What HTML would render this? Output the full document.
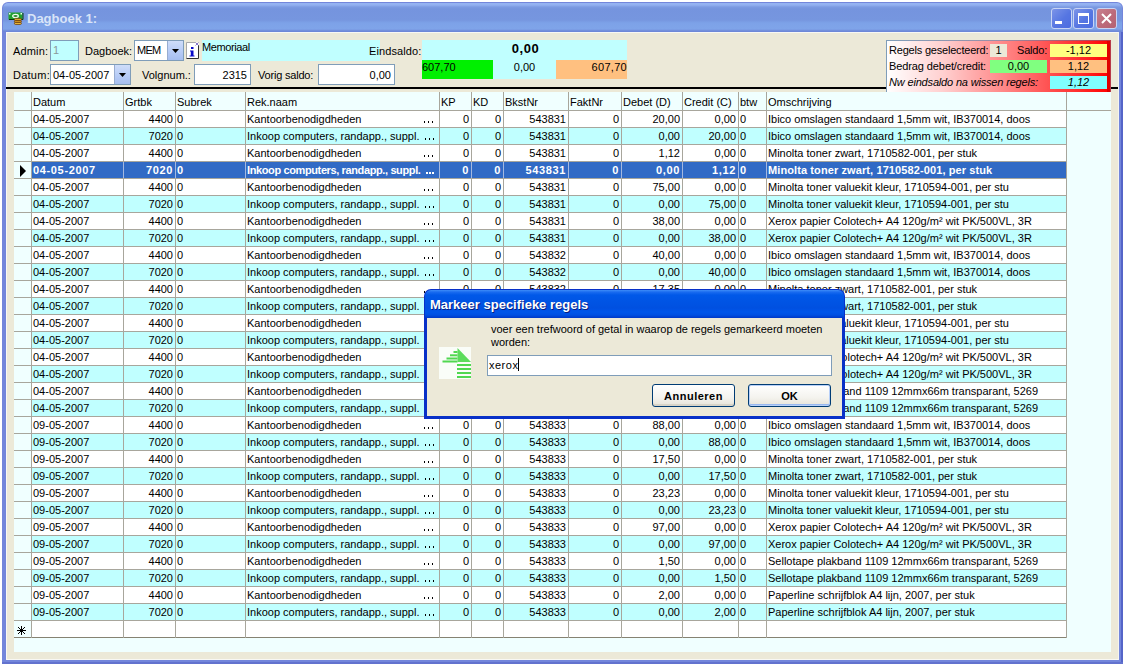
<!DOCTYPE html><html><head><meta charset="utf-8"><style>
*{margin:0;padding:0;box-sizing:border-box}
html,body{width:1126px;height:667px;overflow:hidden;background:#fff;font-family:"Liberation Sans", sans-serif;font-size:11px;color:#000}
.a{position:absolute}
.t{position:absolute;white-space:pre;line-height:16px}
.c{position:absolute;white-space:pre;overflow:hidden;height:16px;line-height:16px}
.r{text-align:right}
.vl{position:absolute;width:1px;background:#A8A69C}
.hl{position:absolute;height:1px;background:#A8A69C}

</style></head><body>
<div class="a" style="left:2px;top:2px;width:1121px;height:662px;background:#7386DB;border-radius:6px 6px 0 0"></div>
<div class="a" style="left:3px;top:3px;width:1119px;height:29px;border-radius:5px 5px 0 0;background:linear-gradient(#96B4F2 0px,#92B0F0 2px,#7C9AE2 4px,#7594DE 6px,#7696DF 17px,#7DA2E8 20px,#7FA4E9 26px,#7390DC 27.5px,#6C84D6 29px)"></div>
<svg class="a" style="left:8px;top:12px" width="16" height="14" viewBox="0 0 16 14">
<rect x="0.5" y="0.5" width="14" height="7" fill="#20A030"/>
<path d="M1 7.5H15V1" fill="none" stroke="#0A3A10" stroke-width="1"/>
<ellipse cx="7.5" cy="4" rx="2.8" ry="1.6" fill="#2A8A30" stroke="#F0FFF0" stroke-width="1.3"/>
<rect x="1" y="1" width="1.5" height="1.5" fill="#F0FFF0"/><rect x="12.5" y="1" width="1.5" height="1.5" fill="#F0FFF0"/>
<g stroke="#6A3A08" stroke-width="0.8">
<rect x="6.4" y="6.4" width="7" height="2" rx="1" fill="#F0C040"/>
<rect x="6.4" y="8.4" width="7" height="2" rx="1" fill="#E0A020"/>
<rect x="6.4" y="10.4" width="7" height="2" rx="1" fill="#F0C040"/>
</g>
</svg>
<div class="t" style="left:27px;top:11px;font-size:13px;font-weight:bold;color:#D8E4F8;line-height:16px">Dagboek 1:</div>
<div class="a" style="left:1051px;top:8px;width:21px;height:21px;border:1px solid #C8D4F4;border-radius:3px;background:linear-gradient(135deg,#7C94E8,#5676E2 55%,#4C6CE0)"><div class="a" style="left:3px;top:12px;width:7px;height:3px;background:#fff"></div></div>
<div class="a" style="left:1073px;top:8px;width:21px;height:21px;border:1px solid #C8D4F4;border-radius:3px;background:linear-gradient(135deg,#7C94E8,#5676E2 55%,#4C6CE0)"><div class="a" style="left:4px;top:4px;width:11px;height:11px;border:1px solid #fff;border-top-width:3px"></div></div>
<div class="a" style="left:1096px;top:8px;width:21px;height:21px;border:1px solid #C8D4F4;border-radius:3px;background:linear-gradient(135deg,#C8808E,#BC6A7A 55%,#B46272)"><svg class="a" style="left:3px;top:3px" width="13" height="13"><path d="M2 2L11 11M11 2L2 11" stroke="#fff" stroke-width="2"/></svg></div>
<div class="a" style="left:1121px;top:32px;width:2px;height:632px;background:#5565C8"></div>
<div class="a" style="left:2px;top:662px;width:1121px;height:2px;background:#6272CE"></div>
<div class="a" style="left:6px;top:32px;width:1113px;height:628px;background:#ECE9D8;border:1px solid #F8F8F4;border-right-color:#F4F4F0"></div>
<div class="t" style="left:13px;top:43px;letter-spacing:0.15px">Admin:</div>
<div class="a" style="left:50px;top:40px;width:29px;height:21px;background:#C0FFFF;border:1px solid #7F9DB9;"></div>
<div class="t" style="left:53px;top:42px;color:#8A9A9A">1</div>
<div class="t" style="left:85px;top:43px;">Dagboek:</div>
<div class="a" style="left:134px;top:40px;width:50px;height:21px;background:#fff;border:1px solid #7F9DB9;"></div>
<div class="t" style="left:137px;top:42px;letter-spacing:-0.7px">MEM</div>
<div class="a" style="left:167px;top:41px;width:16px;height:19px;background:linear-gradient(#CFDDF9,#B9CDF6 50%,#A6BEF0);border-left:1px solid #98ACD0"></div>
<svg class="a" style="left:172px;top:49px" width="7" height="4"><path d="M0 0H7L3.5 4Z" fill="#000"/></svg>
<svg class="a" style="left:186px;top:42px" width="14" height="18" viewBox="0 0 14 18">
<rect x="0.5" y="0.5" width="12" height="16" fill="#fff"/>
<path d="M0.5 16.5V0.5H9.5" fill="none" stroke="#A8A8A8"/>
<path d="M12.5 3V16.5H0.5" fill="none" stroke="#303030"/>
<path d="M9.5 0.5L12.5 3.5M12.5 0.5L9.5 3.5" stroke="#8878C8" stroke-width="1"/>
<rect x="5" y="5" width="2.5" height="2" fill="#0808C8"/>
<path d="M4 8.5H7.5V13.5H8.5V14.5H3.5V13.5H4.8V9.5H4Z" fill="#0808C8"/>
</svg>
<div class="a" style="left:202px;top:40px;width:178px;height:21px;background:#C0FFFF"></div>
<div class="t" style="left:202px;top:39px;letter-spacing:-0.4px">Memoriaal</div>
<div class="t" style="left:369px;top:43px;letter-spacing:0.1px">Eindsaldo:</div>
<div class="t" style="left:13px;top:67px;letter-spacing:0.25px">Datum:</div>
<div class="a" style="left:50px;top:64px;width:81px;height:21px;background:#fff;border:1px solid #7F9DB9;"></div>
<div class="t" style="left:53px;top:67px;">04-05-2007</div>
<div class="a" style="left:114px;top:65px;width:16px;height:19px;background:linear-gradient(#CFDDF9,#B9CDF6 50%,#A6BEF0);border-left:1px solid #98ACD0"></div>
<svg class="a" style="left:119px;top:73px" width="7" height="4"><path d="M0 0H7L3.5 4Z" fill="#000"/></svg>
<div class="t" style="left:142px;top:67px;">Volgnum.:</div>
<div class="a" style="left:194px;top:64px;width:57px;height:21px;background:#fff;border:1px solid #7F9DB9;"></div>
<div class="t r" style="left:196px;top:67px;width:51px">2315</div>
<div class="t" style="left:258px;top:67px;letter-spacing:-0.2px">Vorig saldo:</div>
<div class="a" style="left:318px;top:64px;width:77px;height:21px;background:#fff;border:1px solid #7F9DB9;"></div>
<div class="t r" style="left:320px;top:67px;width:71px">0,00</div>
<div class="a" style="left:422px;top:40px;width:205px;height:39px;background:#C0FFFF"></div>
<div class="t" style="left:423px;top:41px;width:205px;text-align:center;font-size:13px;font-weight:bold;line-height:16px;letter-spacing:0.6px">0,00</div>
<div class="a" style="left:422px;top:60px;width:71px;height:19px;background:#00F000"></div>
<div class="a" style="left:556px;top:60px;width:71px;height:19px;background:#FFC080"></div>
<div class="t" style="left:422px;top:59px;">607,70</div>
<div class="t" style="left:493px;top:59px;width:63px;text-align:center">0,00</div>
<div class="t r" style="left:556px;top:59px;width:71px;letter-spacing:0.3px">607,70</div>
<div class="a" style="left:6px;top:87px;width:1112px;height:2px;background:#000"></div>
<div class="a" style="left:886px;top:40px;width:225px;height:53px;border:1px solid #7F9DB9;border-image:linear-gradient(90deg,#7F9DB9 0%,#9A8FA8 50%,#B83848 100%) 1;background:linear-gradient(90deg,#FFFFFF 0%,#FFD0D0 25%,#FF8080 55%,#FF3030 85%,#FF0000 100%)"></div>
<div class="a" style="left:1107px;top:41px;width:3px;height:51px;background:#E00000"></div>
<div class="t" style="left:889px;top:42px;letter-spacing:-0.2px">Regels geselecteerd:</div>
<div class="a" style="left:990px;top:44px;width:17px;height:13px;background:#ECE9D8"></div>
<div class="t" style="left:990px;top:42px;width:17px;text-align:center">1</div>
<div class="t" style="left:1017px;top:42px;letter-spacing:-0.2px">Saldo:</div>
<div class="a" style="left:1050px;top:44px;width:57px;height:13px;background:#FFFF80"></div>
<div class="t" style="left:1050px;top:42px;width:57px;text-align:center">-1,12</div>
<div class="t" style="left:889px;top:58px;letter-spacing:-0.1px">Bedrag debet/credit:</div>
<div class="a" style="left:990px;top:60px;width:57px;height:13px;background:#80FF80"></div>
<div class="t" style="left:990px;top:58px;width:57px;text-align:center">0,00</div>
<div class="a" style="left:1050px;top:60px;width:57px;height:13px;background:#FFC080"></div>
<div class="t" style="left:1050px;top:58px;width:57px;text-align:center">1,12</div>
<div class="t" style="left:889px;top:74px;font-style:italic;letter-spacing:-0.17px">Nw eindsaldo na wissen regels:</div>
<div class="a" style="left:1050px;top:76px;width:57px;height:13px;background:#80FFFF"></div>
<div class="t" style="left:1050px;top:74px;width:57px;text-align:center;font-style:italic">1,12</div>
<div class="a" style="left:14px;top:92px;width:1097px;height:560px;background:#F0FFFF"></div>
<div class="c" style="left:32px;top:93px;width:91px;padding-left:1px;height:18px;line-height:18px">Datum</div>
<div class="c" style="left:124px;top:93px;width:51px;padding-left:1px;height:18px;line-height:18px">Grtbk</div>
<div class="c" style="left:176px;top:93px;width:69px;padding-left:1px;height:18px;line-height:18px">Subrek</div>
<div class="c" style="left:246px;top:93px;width:193px;padding-left:1px;height:18px;line-height:18px">Rek.naam</div>
<div class="c" style="left:440px;top:93px;width:31px;padding-left:1px;height:18px;line-height:18px">KP</div>
<div class="c" style="left:472px;top:93px;width:31px;padding-left:1px;height:18px;line-height:18px">KD</div>
<div class="c" style="left:504px;top:93px;width:64px;padding-left:1px;height:18px;line-height:18px">BkstNr</div>
<div class="c" style="left:569px;top:93px;width:52px;padding-left:1px;height:18px;line-height:18px">FaktNr</div>
<div class="c" style="left:622px;top:93px;width:60px;padding-left:1px;height:18px;line-height:18px">Debet (D)</div>
<div class="c" style="left:683px;top:93px;width:55px;padding-left:1px;height:18px;line-height:18px">Credit (C)</div>
<div class="c" style="left:739px;top:93px;width:27px;padding-left:1px;height:18px;line-height:18px">btw</div>
<div class="c" style="left:767px;top:93px;width:299px;padding-left:1px;height:18px;line-height:18px">Omschrijving</div>
<div class="hl" style="left:14px;top:110px;width:1097px"></div>
<div class="a" style="left:32px;top:111px;width:1034px;height:16px;background:#FFFFFF"></div>
<div class="hl" style="left:14px;top:127px;width:1052px;"></div>
<div class="c" style="left:32px;top:111px;width:91px;padding-left:1px;">04-05-2007</div>
<div class="c" style="left:124px;top:111px;width:51px;text-align:right;padding-right:2px;">4400</div>
<div class="c" style="left:176px;top:111px;width:69px;padding-left:1px;">0</div>
<div class="c" style="left:246px;top:111px;width:193px;padding-left:1px;padding-right:5px;">Kantoorbenodigdheden</div>
<div class="a" style="left:424px;top:121px;width:1px;height:2px;background:#000"></div>
<div class="a" style="left:428px;top:121px;width:1px;height:2px;background:#000"></div>
<div class="a" style="left:432px;top:121px;width:1px;height:2px;background:#000"></div>
<div class="c" style="left:440px;top:111px;width:31px;text-align:right;padding-right:2px;">0</div>
<div class="c" style="left:472px;top:111px;width:31px;text-align:right;padding-right:2px;">0</div>
<div class="c" style="left:504px;top:111px;width:64px;text-align:right;padding-right:2px;">543831</div>
<div class="c" style="left:569px;top:111px;width:52px;text-align:right;padding-right:2px;">0</div>
<div class="c" style="left:622px;top:111px;width:60px;text-align:right;padding-right:2px;">20,00</div>
<div class="c" style="left:683px;top:111px;width:55px;text-align:right;padding-right:2px;">0,00</div>
<div class="c" style="left:739px;top:111px;width:27px;padding-left:1px;">0</div>
<div class="c" style="left:767px;top:111px;width:299px;padding-left:1px;">Ibico omslagen standaard 1,5mm wit, IB370014, doos</div>
<div class="a" style="left:32px;top:128px;width:1034px;height:16px;background:#C0FFFF"></div>
<div class="hl" style="left:14px;top:144px;width:1052px;"></div>
<div class="c" style="left:32px;top:128px;width:91px;padding-left:1px;">04-05-2007</div>
<div class="c" style="left:124px;top:128px;width:51px;text-align:right;padding-right:2px;">7020</div>
<div class="c" style="left:176px;top:128px;width:69px;padding-left:1px;">0</div>
<div class="c" style="left:246px;top:128px;width:193px;padding-left:1px;padding-right:5px;">Inkoop computers, randapp., suppl.</div>
<div class="a" style="left:425px;top:138px;width:1px;height:2px;background:#000"></div>
<div class="a" style="left:429px;top:138px;width:1px;height:2px;background:#000"></div>
<div class="a" style="left:433px;top:138px;width:1px;height:2px;background:#000"></div>
<div class="c" style="left:440px;top:128px;width:31px;text-align:right;padding-right:2px;">0</div>
<div class="c" style="left:472px;top:128px;width:31px;text-align:right;padding-right:2px;">0</div>
<div class="c" style="left:504px;top:128px;width:64px;text-align:right;padding-right:2px;">543831</div>
<div class="c" style="left:569px;top:128px;width:52px;text-align:right;padding-right:2px;">0</div>
<div class="c" style="left:622px;top:128px;width:60px;text-align:right;padding-right:2px;">0,00</div>
<div class="c" style="left:683px;top:128px;width:55px;text-align:right;padding-right:2px;">20,00</div>
<div class="c" style="left:739px;top:128px;width:27px;padding-left:1px;">0</div>
<div class="c" style="left:767px;top:128px;width:299px;padding-left:1px;">Ibico omslagen standaard 1,5mm wit, IB370014, doos</div>
<div class="a" style="left:32px;top:145px;width:1034px;height:16px;background:#FFFFFF"></div>
<div class="hl" style="left:14px;top:161px;width:1052px;"></div>
<div class="c" style="left:32px;top:145px;width:91px;padding-left:1px;">04-05-2007</div>
<div class="c" style="left:124px;top:145px;width:51px;text-align:right;padding-right:2px;">4400</div>
<div class="c" style="left:176px;top:145px;width:69px;padding-left:1px;">0</div>
<div class="c" style="left:246px;top:145px;width:193px;padding-left:1px;padding-right:5px;">Kantoorbenodigdheden</div>
<div class="a" style="left:424px;top:155px;width:1px;height:2px;background:#000"></div>
<div class="a" style="left:428px;top:155px;width:1px;height:2px;background:#000"></div>
<div class="a" style="left:432px;top:155px;width:1px;height:2px;background:#000"></div>
<div class="c" style="left:440px;top:145px;width:31px;text-align:right;padding-right:2px;">0</div>
<div class="c" style="left:472px;top:145px;width:31px;text-align:right;padding-right:2px;">0</div>
<div class="c" style="left:504px;top:145px;width:64px;text-align:right;padding-right:2px;">543831</div>
<div class="c" style="left:569px;top:145px;width:52px;text-align:right;padding-right:2px;">0</div>
<div class="c" style="left:622px;top:145px;width:60px;text-align:right;padding-right:2px;">1,12</div>
<div class="c" style="left:683px;top:145px;width:55px;text-align:right;padding-right:2px;">0,00</div>
<div class="c" style="left:739px;top:145px;width:27px;padding-left:1px;">0</div>
<div class="c" style="left:767px;top:145px;width:299px;padding-left:1px;">Minolta toner zwart, 1710582-001, per stuk</div>
<div class="a" style="left:32px;top:162px;width:1034px;height:16px;background:#316AC5"></div>
<div class="hl" style="left:14px;top:178px;width:1052px;"></div>
<svg class="a" style="left:19px;top:165px" width="8" height="12"><path d="M1 0L7 6L1 12Z" fill="#000"/></svg>
<div class="c" style="left:32px;top:162px;width:91px;padding-left:1px;color:#fff;font-weight:bold;letter-spacing:0.65px;">04-05-2007</div>
<div class="c" style="left:124px;top:162px;width:51px;text-align:right;padding-right:2px;color:#fff;font-weight:bold;letter-spacing:0.65px;">7020</div>
<div class="c" style="left:176px;top:162px;width:69px;padding-left:1px;color:#fff;font-weight:bold;letter-spacing:0.65px;">0</div>
<div class="c" style="left:246px;top:162px;width:193px;padding-left:1px;color:#fff;font-weight:bold;letter-spacing:-0.38px;padding-right:5px;">Inkoop computers, randapp., suppl.</div>
<div class="a" style="left:426px;top:172px;width:2px;height:2px;background:#fff"></div>
<div class="a" style="left:429px;top:172px;width:2px;height:2px;background:#fff"></div>
<div class="a" style="left:432px;top:172px;width:2px;height:2px;background:#fff"></div>
<div class="c" style="left:440px;top:162px;width:31px;text-align:right;padding-right:2px;color:#fff;font-weight:bold;letter-spacing:0.65px;">0</div>
<div class="c" style="left:472px;top:162px;width:31px;text-align:right;padding-right:2px;color:#fff;font-weight:bold;letter-spacing:0.65px;">0</div>
<div class="c" style="left:504px;top:162px;width:64px;text-align:right;padding-right:2px;color:#fff;font-weight:bold;letter-spacing:0.65px;">543831</div>
<div class="c" style="left:569px;top:162px;width:52px;text-align:right;padding-right:2px;color:#fff;font-weight:bold;letter-spacing:0.65px;">0</div>
<div class="c" style="left:622px;top:162px;width:60px;text-align:right;padding-right:2px;color:#fff;font-weight:bold;letter-spacing:0.65px;">0,00</div>
<div class="c" style="left:683px;top:162px;width:55px;text-align:right;padding-right:2px;color:#fff;font-weight:bold;letter-spacing:0.65px;">1,12</div>
<div class="c" style="left:739px;top:162px;width:27px;padding-left:1px;color:#fff;font-weight:bold;letter-spacing:0.65px;">0</div>
<div class="c" style="left:767px;top:162px;width:299px;padding-left:1px;color:#fff;font-weight:bold;letter-spacing:0.1px;">Minolta toner zwart, 1710582-001, per stuk</div>
<div class="a" style="left:32px;top:179px;width:1034px;height:16px;background:#FFFFFF"></div>
<div class="hl" style="left:14px;top:195px;width:1052px;"></div>
<div class="c" style="left:32px;top:179px;width:91px;padding-left:1px;">04-05-2007</div>
<div class="c" style="left:124px;top:179px;width:51px;text-align:right;padding-right:2px;">4400</div>
<div class="c" style="left:176px;top:179px;width:69px;padding-left:1px;">0</div>
<div class="c" style="left:246px;top:179px;width:193px;padding-left:1px;padding-right:5px;">Kantoorbenodigdheden</div>
<div class="a" style="left:424px;top:189px;width:1px;height:2px;background:#000"></div>
<div class="a" style="left:428px;top:189px;width:1px;height:2px;background:#000"></div>
<div class="a" style="left:432px;top:189px;width:1px;height:2px;background:#000"></div>
<div class="c" style="left:440px;top:179px;width:31px;text-align:right;padding-right:2px;">0</div>
<div class="c" style="left:472px;top:179px;width:31px;text-align:right;padding-right:2px;">0</div>
<div class="c" style="left:504px;top:179px;width:64px;text-align:right;padding-right:2px;">543831</div>
<div class="c" style="left:569px;top:179px;width:52px;text-align:right;padding-right:2px;">0</div>
<div class="c" style="left:622px;top:179px;width:60px;text-align:right;padding-right:2px;">75,00</div>
<div class="c" style="left:683px;top:179px;width:55px;text-align:right;padding-right:2px;">0,00</div>
<div class="c" style="left:739px;top:179px;width:27px;padding-left:1px;">0</div>
<div class="c" style="left:767px;top:179px;width:299px;padding-left:1px;">Minolta toner valuekit kleur, 1710594-001, per stu</div>
<div class="a" style="left:32px;top:196px;width:1034px;height:16px;background:#C0FFFF"></div>
<div class="hl" style="left:14px;top:212px;width:1052px;"></div>
<div class="c" style="left:32px;top:196px;width:91px;padding-left:1px;">04-05-2007</div>
<div class="c" style="left:124px;top:196px;width:51px;text-align:right;padding-right:2px;">7020</div>
<div class="c" style="left:176px;top:196px;width:69px;padding-left:1px;">0</div>
<div class="c" style="left:246px;top:196px;width:193px;padding-left:1px;padding-right:5px;">Inkoop computers, randapp., suppl.</div>
<div class="a" style="left:425px;top:206px;width:1px;height:2px;background:#000"></div>
<div class="a" style="left:429px;top:206px;width:1px;height:2px;background:#000"></div>
<div class="a" style="left:433px;top:206px;width:1px;height:2px;background:#000"></div>
<div class="c" style="left:440px;top:196px;width:31px;text-align:right;padding-right:2px;">0</div>
<div class="c" style="left:472px;top:196px;width:31px;text-align:right;padding-right:2px;">0</div>
<div class="c" style="left:504px;top:196px;width:64px;text-align:right;padding-right:2px;">543831</div>
<div class="c" style="left:569px;top:196px;width:52px;text-align:right;padding-right:2px;">0</div>
<div class="c" style="left:622px;top:196px;width:60px;text-align:right;padding-right:2px;">0,00</div>
<div class="c" style="left:683px;top:196px;width:55px;text-align:right;padding-right:2px;">75,00</div>
<div class="c" style="left:739px;top:196px;width:27px;padding-left:1px;">0</div>
<div class="c" style="left:767px;top:196px;width:299px;padding-left:1px;">Minolta toner valuekit kleur, 1710594-001, per stu</div>
<div class="a" style="left:32px;top:213px;width:1034px;height:16px;background:#FFFFFF"></div>
<div class="hl" style="left:14px;top:229px;width:1052px;"></div>
<div class="c" style="left:32px;top:213px;width:91px;padding-left:1px;">04-05-2007</div>
<div class="c" style="left:124px;top:213px;width:51px;text-align:right;padding-right:2px;">4400</div>
<div class="c" style="left:176px;top:213px;width:69px;padding-left:1px;">0</div>
<div class="c" style="left:246px;top:213px;width:193px;padding-left:1px;padding-right:5px;">Kantoorbenodigdheden</div>
<div class="a" style="left:424px;top:223px;width:1px;height:2px;background:#000"></div>
<div class="a" style="left:428px;top:223px;width:1px;height:2px;background:#000"></div>
<div class="a" style="left:432px;top:223px;width:1px;height:2px;background:#000"></div>
<div class="c" style="left:440px;top:213px;width:31px;text-align:right;padding-right:2px;">0</div>
<div class="c" style="left:472px;top:213px;width:31px;text-align:right;padding-right:2px;">0</div>
<div class="c" style="left:504px;top:213px;width:64px;text-align:right;padding-right:2px;">543831</div>
<div class="c" style="left:569px;top:213px;width:52px;text-align:right;padding-right:2px;">0</div>
<div class="c" style="left:622px;top:213px;width:60px;text-align:right;padding-right:2px;">38,00</div>
<div class="c" style="left:683px;top:213px;width:55px;text-align:right;padding-right:2px;">0,00</div>
<div class="c" style="left:739px;top:213px;width:27px;padding-left:1px;">0</div>
<div class="c" style="left:767px;top:213px;width:299px;padding-left:1px;">Xerox papier Colotech+ A4 120g/m² wit PK/500VL, 3R</div>
<div class="a" style="left:32px;top:230px;width:1034px;height:16px;background:#C0FFFF"></div>
<div class="hl" style="left:14px;top:246px;width:1052px;"></div>
<div class="c" style="left:32px;top:230px;width:91px;padding-left:1px;">04-05-2007</div>
<div class="c" style="left:124px;top:230px;width:51px;text-align:right;padding-right:2px;">7020</div>
<div class="c" style="left:176px;top:230px;width:69px;padding-left:1px;">0</div>
<div class="c" style="left:246px;top:230px;width:193px;padding-left:1px;padding-right:5px;">Inkoop computers, randapp., suppl.</div>
<div class="a" style="left:425px;top:240px;width:1px;height:2px;background:#000"></div>
<div class="a" style="left:429px;top:240px;width:1px;height:2px;background:#000"></div>
<div class="a" style="left:433px;top:240px;width:1px;height:2px;background:#000"></div>
<div class="c" style="left:440px;top:230px;width:31px;text-align:right;padding-right:2px;">0</div>
<div class="c" style="left:472px;top:230px;width:31px;text-align:right;padding-right:2px;">0</div>
<div class="c" style="left:504px;top:230px;width:64px;text-align:right;padding-right:2px;">543831</div>
<div class="c" style="left:569px;top:230px;width:52px;text-align:right;padding-right:2px;">0</div>
<div class="c" style="left:622px;top:230px;width:60px;text-align:right;padding-right:2px;">0,00</div>
<div class="c" style="left:683px;top:230px;width:55px;text-align:right;padding-right:2px;">38,00</div>
<div class="c" style="left:739px;top:230px;width:27px;padding-left:1px;">0</div>
<div class="c" style="left:767px;top:230px;width:299px;padding-left:1px;">Xerox papier Colotech+ A4 120g/m² wit PK/500VL, 3R</div>
<div class="a" style="left:32px;top:247px;width:1034px;height:16px;background:#FFFFFF"></div>
<div class="hl" style="left:14px;top:263px;width:1052px;"></div>
<div class="c" style="left:32px;top:247px;width:91px;padding-left:1px;">04-05-2007</div>
<div class="c" style="left:124px;top:247px;width:51px;text-align:right;padding-right:2px;">4400</div>
<div class="c" style="left:176px;top:247px;width:69px;padding-left:1px;">0</div>
<div class="c" style="left:246px;top:247px;width:193px;padding-left:1px;padding-right:5px;">Kantoorbenodigdheden</div>
<div class="a" style="left:424px;top:257px;width:1px;height:2px;background:#000"></div>
<div class="a" style="left:428px;top:257px;width:1px;height:2px;background:#000"></div>
<div class="a" style="left:432px;top:257px;width:1px;height:2px;background:#000"></div>
<div class="c" style="left:440px;top:247px;width:31px;text-align:right;padding-right:2px;">0</div>
<div class="c" style="left:472px;top:247px;width:31px;text-align:right;padding-right:2px;">0</div>
<div class="c" style="left:504px;top:247px;width:64px;text-align:right;padding-right:2px;">543832</div>
<div class="c" style="left:569px;top:247px;width:52px;text-align:right;padding-right:2px;">0</div>
<div class="c" style="left:622px;top:247px;width:60px;text-align:right;padding-right:2px;">40,00</div>
<div class="c" style="left:683px;top:247px;width:55px;text-align:right;padding-right:2px;">0,00</div>
<div class="c" style="left:739px;top:247px;width:27px;padding-left:1px;">0</div>
<div class="c" style="left:767px;top:247px;width:299px;padding-left:1px;">Ibico omslagen standaard 1,5mm wit, IB370014, doos</div>
<div class="a" style="left:32px;top:264px;width:1034px;height:16px;background:#C0FFFF"></div>
<div class="hl" style="left:14px;top:280px;width:1052px;"></div>
<div class="c" style="left:32px;top:264px;width:91px;padding-left:1px;">04-05-2007</div>
<div class="c" style="left:124px;top:264px;width:51px;text-align:right;padding-right:2px;">7020</div>
<div class="c" style="left:176px;top:264px;width:69px;padding-left:1px;">0</div>
<div class="c" style="left:246px;top:264px;width:193px;padding-left:1px;padding-right:5px;">Inkoop computers, randapp., suppl.</div>
<div class="a" style="left:425px;top:274px;width:1px;height:2px;background:#000"></div>
<div class="a" style="left:429px;top:274px;width:1px;height:2px;background:#000"></div>
<div class="a" style="left:433px;top:274px;width:1px;height:2px;background:#000"></div>
<div class="c" style="left:440px;top:264px;width:31px;text-align:right;padding-right:2px;">0</div>
<div class="c" style="left:472px;top:264px;width:31px;text-align:right;padding-right:2px;">0</div>
<div class="c" style="left:504px;top:264px;width:64px;text-align:right;padding-right:2px;">543832</div>
<div class="c" style="left:569px;top:264px;width:52px;text-align:right;padding-right:2px;">0</div>
<div class="c" style="left:622px;top:264px;width:60px;text-align:right;padding-right:2px;">0,00</div>
<div class="c" style="left:683px;top:264px;width:55px;text-align:right;padding-right:2px;">40,00</div>
<div class="c" style="left:739px;top:264px;width:27px;padding-left:1px;">0</div>
<div class="c" style="left:767px;top:264px;width:299px;padding-left:1px;">Ibico omslagen standaard 1,5mm wit, IB370014, doos</div>
<div class="a" style="left:32px;top:281px;width:1034px;height:16px;background:#FFFFFF"></div>
<div class="hl" style="left:14px;top:297px;width:1052px;"></div>
<div class="c" style="left:32px;top:281px;width:91px;padding-left:1px;">04-05-2007</div>
<div class="c" style="left:124px;top:281px;width:51px;text-align:right;padding-right:2px;">4400</div>
<div class="c" style="left:176px;top:281px;width:69px;padding-left:1px;">0</div>
<div class="c" style="left:246px;top:281px;width:193px;padding-left:1px;padding-right:5px;">Kantoorbenodigdheden</div>
<div class="a" style="left:424px;top:291px;width:1px;height:2px;background:#000"></div>
<div class="a" style="left:428px;top:291px;width:1px;height:2px;background:#000"></div>
<div class="a" style="left:432px;top:291px;width:1px;height:2px;background:#000"></div>
<div class="c" style="left:440px;top:281px;width:31px;text-align:right;padding-right:2px;">0</div>
<div class="c" style="left:472px;top:281px;width:31px;text-align:right;padding-right:2px;">0</div>
<div class="c" style="left:504px;top:281px;width:64px;text-align:right;padding-right:2px;">543832</div>
<div class="c" style="left:569px;top:281px;width:52px;text-align:right;padding-right:2px;">0</div>
<div class="c" style="left:622px;top:281px;width:60px;text-align:right;padding-right:2px;">17,35</div>
<div class="c" style="left:683px;top:281px;width:55px;text-align:right;padding-right:2px;">0,00</div>
<div class="c" style="left:739px;top:281px;width:27px;padding-left:1px;">0</div>
<div class="c" style="left:767px;top:281px;width:299px;padding-left:1px;">Minolta toner zwart, 1710582-001, per stuk</div>
<div class="a" style="left:32px;top:298px;width:1034px;height:16px;background:#C0FFFF"></div>
<div class="hl" style="left:14px;top:314px;width:1052px;"></div>
<div class="c" style="left:32px;top:298px;width:91px;padding-left:1px;">04-05-2007</div>
<div class="c" style="left:124px;top:298px;width:51px;text-align:right;padding-right:2px;">7020</div>
<div class="c" style="left:176px;top:298px;width:69px;padding-left:1px;">0</div>
<div class="c" style="left:246px;top:298px;width:193px;padding-left:1px;padding-right:5px;">Inkoop computers, randapp., suppl.</div>
<div class="a" style="left:425px;top:308px;width:1px;height:2px;background:#000"></div>
<div class="a" style="left:429px;top:308px;width:1px;height:2px;background:#000"></div>
<div class="a" style="left:433px;top:308px;width:1px;height:2px;background:#000"></div>
<div class="c" style="left:440px;top:298px;width:31px;text-align:right;padding-right:2px;">0</div>
<div class="c" style="left:472px;top:298px;width:31px;text-align:right;padding-right:2px;">0</div>
<div class="c" style="left:504px;top:298px;width:64px;text-align:right;padding-right:2px;">543832</div>
<div class="c" style="left:569px;top:298px;width:52px;text-align:right;padding-right:2px;">0</div>
<div class="c" style="left:622px;top:298px;width:60px;text-align:right;padding-right:2px;">0,00</div>
<div class="c" style="left:683px;top:298px;width:55px;text-align:right;padding-right:2px;">17,35</div>
<div class="c" style="left:739px;top:298px;width:27px;padding-left:1px;">0</div>
<div class="c" style="left:767px;top:298px;width:299px;padding-left:1px;">Minolta toner zwart, 1710582-001, per stuk</div>
<div class="a" style="left:32px;top:315px;width:1034px;height:16px;background:#FFFFFF"></div>
<div class="hl" style="left:14px;top:331px;width:1052px;"></div>
<div class="c" style="left:32px;top:315px;width:91px;padding-left:1px;">04-05-2007</div>
<div class="c" style="left:124px;top:315px;width:51px;text-align:right;padding-right:2px;">4400</div>
<div class="c" style="left:176px;top:315px;width:69px;padding-left:1px;">0</div>
<div class="c" style="left:246px;top:315px;width:193px;padding-left:1px;padding-right:5px;">Kantoorbenodigdheden</div>
<div class="a" style="left:424px;top:325px;width:1px;height:2px;background:#000"></div>
<div class="a" style="left:428px;top:325px;width:1px;height:2px;background:#000"></div>
<div class="a" style="left:432px;top:325px;width:1px;height:2px;background:#000"></div>
<div class="c" style="left:440px;top:315px;width:31px;text-align:right;padding-right:2px;">0</div>
<div class="c" style="left:472px;top:315px;width:31px;text-align:right;padding-right:2px;">0</div>
<div class="c" style="left:504px;top:315px;width:64px;text-align:right;padding-right:2px;">543832</div>
<div class="c" style="left:569px;top:315px;width:52px;text-align:right;padding-right:2px;">0</div>
<div class="c" style="left:622px;top:315px;width:60px;text-align:right;padding-right:2px;">2,17</div>
<div class="c" style="left:683px;top:315px;width:55px;text-align:right;padding-right:2px;">0,00</div>
<div class="c" style="left:739px;top:315px;width:27px;padding-left:1px;">0</div>
<div class="c" style="left:767px;top:315px;width:299px;padding-left:1px;">Minolta toner valuekit kleur, 1710594-001, per stu</div>
<div class="a" style="left:32px;top:332px;width:1034px;height:16px;background:#C0FFFF"></div>
<div class="hl" style="left:14px;top:348px;width:1052px;"></div>
<div class="c" style="left:32px;top:332px;width:91px;padding-left:1px;">04-05-2007</div>
<div class="c" style="left:124px;top:332px;width:51px;text-align:right;padding-right:2px;">7020</div>
<div class="c" style="left:176px;top:332px;width:69px;padding-left:1px;">0</div>
<div class="c" style="left:246px;top:332px;width:193px;padding-left:1px;padding-right:5px;">Inkoop computers, randapp., suppl.</div>
<div class="a" style="left:425px;top:342px;width:1px;height:2px;background:#000"></div>
<div class="a" style="left:429px;top:342px;width:1px;height:2px;background:#000"></div>
<div class="a" style="left:433px;top:342px;width:1px;height:2px;background:#000"></div>
<div class="c" style="left:440px;top:332px;width:31px;text-align:right;padding-right:2px;">0</div>
<div class="c" style="left:472px;top:332px;width:31px;text-align:right;padding-right:2px;">0</div>
<div class="c" style="left:504px;top:332px;width:64px;text-align:right;padding-right:2px;">543832</div>
<div class="c" style="left:569px;top:332px;width:52px;text-align:right;padding-right:2px;">0</div>
<div class="c" style="left:622px;top:332px;width:60px;text-align:right;padding-right:2px;">0,00</div>
<div class="c" style="left:683px;top:332px;width:55px;text-align:right;padding-right:2px;">2,17</div>
<div class="c" style="left:739px;top:332px;width:27px;padding-left:1px;">0</div>
<div class="c" style="left:767px;top:332px;width:299px;padding-left:1px;">Minolta toner valuekit kleur, 1710594-001, per stu</div>
<div class="a" style="left:32px;top:349px;width:1034px;height:16px;background:#FFFFFF"></div>
<div class="hl" style="left:14px;top:365px;width:1052px;"></div>
<div class="c" style="left:32px;top:349px;width:91px;padding-left:1px;">04-05-2007</div>
<div class="c" style="left:124px;top:349px;width:51px;text-align:right;padding-right:2px;">4400</div>
<div class="c" style="left:176px;top:349px;width:69px;padding-left:1px;">0</div>
<div class="c" style="left:246px;top:349px;width:193px;padding-left:1px;padding-right:5px;">Kantoorbenodigdheden</div>
<div class="a" style="left:424px;top:359px;width:1px;height:2px;background:#000"></div>
<div class="a" style="left:428px;top:359px;width:1px;height:2px;background:#000"></div>
<div class="a" style="left:432px;top:359px;width:1px;height:2px;background:#000"></div>
<div class="c" style="left:440px;top:349px;width:31px;text-align:right;padding-right:2px;">0</div>
<div class="c" style="left:472px;top:349px;width:31px;text-align:right;padding-right:2px;">0</div>
<div class="c" style="left:504px;top:349px;width:64px;text-align:right;padding-right:2px;">543832</div>
<div class="c" style="left:569px;top:349px;width:52px;text-align:right;padding-right:2px;">0</div>
<div class="c" style="left:622px;top:349px;width:60px;text-align:right;padding-right:2px;">38,00</div>
<div class="c" style="left:683px;top:349px;width:55px;text-align:right;padding-right:2px;">0,00</div>
<div class="c" style="left:739px;top:349px;width:27px;padding-left:1px;">0</div>
<div class="c" style="left:767px;top:349px;width:299px;padding-left:1px;">Xerox papier Colotech+ A4 120g/m² wit PK/500VL, 3R</div>
<div class="a" style="left:32px;top:366px;width:1034px;height:16px;background:#C0FFFF"></div>
<div class="hl" style="left:14px;top:382px;width:1052px;"></div>
<div class="c" style="left:32px;top:366px;width:91px;padding-left:1px;">04-05-2007</div>
<div class="c" style="left:124px;top:366px;width:51px;text-align:right;padding-right:2px;">7020</div>
<div class="c" style="left:176px;top:366px;width:69px;padding-left:1px;">0</div>
<div class="c" style="left:246px;top:366px;width:193px;padding-left:1px;padding-right:5px;">Inkoop computers, randapp., suppl.</div>
<div class="a" style="left:425px;top:376px;width:1px;height:2px;background:#000"></div>
<div class="a" style="left:429px;top:376px;width:1px;height:2px;background:#000"></div>
<div class="a" style="left:433px;top:376px;width:1px;height:2px;background:#000"></div>
<div class="c" style="left:440px;top:366px;width:31px;text-align:right;padding-right:2px;">0</div>
<div class="c" style="left:472px;top:366px;width:31px;text-align:right;padding-right:2px;">0</div>
<div class="c" style="left:504px;top:366px;width:64px;text-align:right;padding-right:2px;">543832</div>
<div class="c" style="left:569px;top:366px;width:52px;text-align:right;padding-right:2px;">0</div>
<div class="c" style="left:622px;top:366px;width:60px;text-align:right;padding-right:2px;">0,00</div>
<div class="c" style="left:683px;top:366px;width:55px;text-align:right;padding-right:2px;">38,00</div>
<div class="c" style="left:739px;top:366px;width:27px;padding-left:1px;">0</div>
<div class="c" style="left:767px;top:366px;width:299px;padding-left:1px;">Xerox papier Colotech+ A4 120g/m² wit PK/500VL, 3R</div>
<div class="a" style="left:32px;top:383px;width:1034px;height:16px;background:#FFFFFF"></div>
<div class="hl" style="left:14px;top:399px;width:1052px;"></div>
<div class="c" style="left:32px;top:383px;width:91px;padding-left:1px;">04-05-2007</div>
<div class="c" style="left:124px;top:383px;width:51px;text-align:right;padding-right:2px;">4400</div>
<div class="c" style="left:176px;top:383px;width:69px;padding-left:1px;">0</div>
<div class="c" style="left:246px;top:383px;width:193px;padding-left:1px;padding-right:5px;">Kantoorbenodigdheden</div>
<div class="a" style="left:424px;top:393px;width:1px;height:2px;background:#000"></div>
<div class="a" style="left:428px;top:393px;width:1px;height:2px;background:#000"></div>
<div class="a" style="left:432px;top:393px;width:1px;height:2px;background:#000"></div>
<div class="c" style="left:440px;top:383px;width:31px;text-align:right;padding-right:2px;">0</div>
<div class="c" style="left:472px;top:383px;width:31px;text-align:right;padding-right:2px;">0</div>
<div class="c" style="left:504px;top:383px;width:64px;text-align:right;padding-right:2px;">543832</div>
<div class="c" style="left:569px;top:383px;width:52px;text-align:right;padding-right:2px;">0</div>
<div class="c" style="left:622px;top:383px;width:60px;text-align:right;padding-right:2px;">1,50</div>
<div class="c" style="left:683px;top:383px;width:55px;text-align:right;padding-right:2px;">0,00</div>
<div class="c" style="left:739px;top:383px;width:27px;padding-left:1px;">0</div>
<div class="c" style="left:767px;top:383px;width:299px;padding-left:1px;">Sellotape plakband 1109 12mmx66m transparant, 5269</div>
<div class="a" style="left:32px;top:400px;width:1034px;height:16px;background:#C0FFFF"></div>
<div class="hl" style="left:14px;top:416px;width:1052px;"></div>
<div class="c" style="left:32px;top:400px;width:91px;padding-left:1px;">04-05-2007</div>
<div class="c" style="left:124px;top:400px;width:51px;text-align:right;padding-right:2px;">7020</div>
<div class="c" style="left:176px;top:400px;width:69px;padding-left:1px;">0</div>
<div class="c" style="left:246px;top:400px;width:193px;padding-left:1px;padding-right:5px;">Inkoop computers, randapp., suppl.</div>
<div class="a" style="left:425px;top:410px;width:1px;height:2px;background:#000"></div>
<div class="a" style="left:429px;top:410px;width:1px;height:2px;background:#000"></div>
<div class="a" style="left:433px;top:410px;width:1px;height:2px;background:#000"></div>
<div class="c" style="left:440px;top:400px;width:31px;text-align:right;padding-right:2px;">0</div>
<div class="c" style="left:472px;top:400px;width:31px;text-align:right;padding-right:2px;">0</div>
<div class="c" style="left:504px;top:400px;width:64px;text-align:right;padding-right:2px;">543832</div>
<div class="c" style="left:569px;top:400px;width:52px;text-align:right;padding-right:2px;">0</div>
<div class="c" style="left:622px;top:400px;width:60px;text-align:right;padding-right:2px;">0,00</div>
<div class="c" style="left:683px;top:400px;width:55px;text-align:right;padding-right:2px;">1,50</div>
<div class="c" style="left:739px;top:400px;width:27px;padding-left:1px;">0</div>
<div class="c" style="left:767px;top:400px;width:299px;padding-left:1px;">Sellotape plakband 1109 12mmx66m transparant, 5269</div>
<div class="a" style="left:32px;top:417px;width:1034px;height:16px;background:#FFFFFF"></div>
<div class="hl" style="left:14px;top:433px;width:1052px;"></div>
<div class="c" style="left:32px;top:417px;width:91px;padding-left:1px;">09-05-2007</div>
<div class="c" style="left:124px;top:417px;width:51px;text-align:right;padding-right:2px;">4400</div>
<div class="c" style="left:176px;top:417px;width:69px;padding-left:1px;">0</div>
<div class="c" style="left:246px;top:417px;width:193px;padding-left:1px;padding-right:5px;">Kantoorbenodigdheden</div>
<div class="a" style="left:424px;top:427px;width:1px;height:2px;background:#000"></div>
<div class="a" style="left:428px;top:427px;width:1px;height:2px;background:#000"></div>
<div class="a" style="left:432px;top:427px;width:1px;height:2px;background:#000"></div>
<div class="c" style="left:440px;top:417px;width:31px;text-align:right;padding-right:2px;">0</div>
<div class="c" style="left:472px;top:417px;width:31px;text-align:right;padding-right:2px;">0</div>
<div class="c" style="left:504px;top:417px;width:64px;text-align:right;padding-right:2px;">543833</div>
<div class="c" style="left:569px;top:417px;width:52px;text-align:right;padding-right:2px;">0</div>
<div class="c" style="left:622px;top:417px;width:60px;text-align:right;padding-right:2px;">88,00</div>
<div class="c" style="left:683px;top:417px;width:55px;text-align:right;padding-right:2px;">0,00</div>
<div class="c" style="left:739px;top:417px;width:27px;padding-left:1px;">0</div>
<div class="c" style="left:767px;top:417px;width:299px;padding-left:1px;">Ibico omslagen standaard 1,5mm wit, IB370014, doos</div>
<div class="a" style="left:32px;top:434px;width:1034px;height:16px;background:#C0FFFF"></div>
<div class="hl" style="left:14px;top:450px;width:1052px;"></div>
<div class="c" style="left:32px;top:434px;width:91px;padding-left:1px;">09-05-2007</div>
<div class="c" style="left:124px;top:434px;width:51px;text-align:right;padding-right:2px;">7020</div>
<div class="c" style="left:176px;top:434px;width:69px;padding-left:1px;">0</div>
<div class="c" style="left:246px;top:434px;width:193px;padding-left:1px;padding-right:5px;">Inkoop computers, randapp., suppl.</div>
<div class="a" style="left:425px;top:444px;width:1px;height:2px;background:#000"></div>
<div class="a" style="left:429px;top:444px;width:1px;height:2px;background:#000"></div>
<div class="a" style="left:433px;top:444px;width:1px;height:2px;background:#000"></div>
<div class="c" style="left:440px;top:434px;width:31px;text-align:right;padding-right:2px;">0</div>
<div class="c" style="left:472px;top:434px;width:31px;text-align:right;padding-right:2px;">0</div>
<div class="c" style="left:504px;top:434px;width:64px;text-align:right;padding-right:2px;">543833</div>
<div class="c" style="left:569px;top:434px;width:52px;text-align:right;padding-right:2px;">0</div>
<div class="c" style="left:622px;top:434px;width:60px;text-align:right;padding-right:2px;">0,00</div>
<div class="c" style="left:683px;top:434px;width:55px;text-align:right;padding-right:2px;">88,00</div>
<div class="c" style="left:739px;top:434px;width:27px;padding-left:1px;">0</div>
<div class="c" style="left:767px;top:434px;width:299px;padding-left:1px;">Ibico omslagen standaard 1,5mm wit, IB370014, doos</div>
<div class="a" style="left:32px;top:451px;width:1034px;height:16px;background:#FFFFFF"></div>
<div class="hl" style="left:14px;top:467px;width:1052px;"></div>
<div class="c" style="left:32px;top:451px;width:91px;padding-left:1px;">09-05-2007</div>
<div class="c" style="left:124px;top:451px;width:51px;text-align:right;padding-right:2px;">4400</div>
<div class="c" style="left:176px;top:451px;width:69px;padding-left:1px;">0</div>
<div class="c" style="left:246px;top:451px;width:193px;padding-left:1px;padding-right:5px;">Kantoorbenodigdheden</div>
<div class="a" style="left:424px;top:461px;width:1px;height:2px;background:#000"></div>
<div class="a" style="left:428px;top:461px;width:1px;height:2px;background:#000"></div>
<div class="a" style="left:432px;top:461px;width:1px;height:2px;background:#000"></div>
<div class="c" style="left:440px;top:451px;width:31px;text-align:right;padding-right:2px;">0</div>
<div class="c" style="left:472px;top:451px;width:31px;text-align:right;padding-right:2px;">0</div>
<div class="c" style="left:504px;top:451px;width:64px;text-align:right;padding-right:2px;">543833</div>
<div class="c" style="left:569px;top:451px;width:52px;text-align:right;padding-right:2px;">0</div>
<div class="c" style="left:622px;top:451px;width:60px;text-align:right;padding-right:2px;">17,50</div>
<div class="c" style="left:683px;top:451px;width:55px;text-align:right;padding-right:2px;">0,00</div>
<div class="c" style="left:739px;top:451px;width:27px;padding-left:1px;">0</div>
<div class="c" style="left:767px;top:451px;width:299px;padding-left:1px;">Minolta toner zwart, 1710582-001, per stuk</div>
<div class="a" style="left:32px;top:468px;width:1034px;height:16px;background:#C0FFFF"></div>
<div class="hl" style="left:14px;top:484px;width:1052px;"></div>
<div class="c" style="left:32px;top:468px;width:91px;padding-left:1px;">09-05-2007</div>
<div class="c" style="left:124px;top:468px;width:51px;text-align:right;padding-right:2px;">7020</div>
<div class="c" style="left:176px;top:468px;width:69px;padding-left:1px;">0</div>
<div class="c" style="left:246px;top:468px;width:193px;padding-left:1px;padding-right:5px;">Inkoop computers, randapp., suppl.</div>
<div class="a" style="left:425px;top:478px;width:1px;height:2px;background:#000"></div>
<div class="a" style="left:429px;top:478px;width:1px;height:2px;background:#000"></div>
<div class="a" style="left:433px;top:478px;width:1px;height:2px;background:#000"></div>
<div class="c" style="left:440px;top:468px;width:31px;text-align:right;padding-right:2px;">0</div>
<div class="c" style="left:472px;top:468px;width:31px;text-align:right;padding-right:2px;">0</div>
<div class="c" style="left:504px;top:468px;width:64px;text-align:right;padding-right:2px;">543833</div>
<div class="c" style="left:569px;top:468px;width:52px;text-align:right;padding-right:2px;">0</div>
<div class="c" style="left:622px;top:468px;width:60px;text-align:right;padding-right:2px;">0,00</div>
<div class="c" style="left:683px;top:468px;width:55px;text-align:right;padding-right:2px;">17,50</div>
<div class="c" style="left:739px;top:468px;width:27px;padding-left:1px;">0</div>
<div class="c" style="left:767px;top:468px;width:299px;padding-left:1px;">Minolta toner zwart, 1710582-001, per stuk</div>
<div class="a" style="left:32px;top:485px;width:1034px;height:16px;background:#FFFFFF"></div>
<div class="hl" style="left:14px;top:501px;width:1052px;"></div>
<div class="c" style="left:32px;top:485px;width:91px;padding-left:1px;">09-05-2007</div>
<div class="c" style="left:124px;top:485px;width:51px;text-align:right;padding-right:2px;">4400</div>
<div class="c" style="left:176px;top:485px;width:69px;padding-left:1px;">0</div>
<div class="c" style="left:246px;top:485px;width:193px;padding-left:1px;padding-right:5px;">Kantoorbenodigdheden</div>
<div class="a" style="left:424px;top:495px;width:1px;height:2px;background:#000"></div>
<div class="a" style="left:428px;top:495px;width:1px;height:2px;background:#000"></div>
<div class="a" style="left:432px;top:495px;width:1px;height:2px;background:#000"></div>
<div class="c" style="left:440px;top:485px;width:31px;text-align:right;padding-right:2px;">0</div>
<div class="c" style="left:472px;top:485px;width:31px;text-align:right;padding-right:2px;">0</div>
<div class="c" style="left:504px;top:485px;width:64px;text-align:right;padding-right:2px;">543833</div>
<div class="c" style="left:569px;top:485px;width:52px;text-align:right;padding-right:2px;">0</div>
<div class="c" style="left:622px;top:485px;width:60px;text-align:right;padding-right:2px;">23,23</div>
<div class="c" style="left:683px;top:485px;width:55px;text-align:right;padding-right:2px;">0,00</div>
<div class="c" style="left:739px;top:485px;width:27px;padding-left:1px;">0</div>
<div class="c" style="left:767px;top:485px;width:299px;padding-left:1px;">Minolta toner valuekit kleur, 1710594-001, per stu</div>
<div class="a" style="left:32px;top:502px;width:1034px;height:16px;background:#C0FFFF"></div>
<div class="hl" style="left:14px;top:518px;width:1052px;"></div>
<div class="c" style="left:32px;top:502px;width:91px;padding-left:1px;">09-05-2007</div>
<div class="c" style="left:124px;top:502px;width:51px;text-align:right;padding-right:2px;">7020</div>
<div class="c" style="left:176px;top:502px;width:69px;padding-left:1px;">0</div>
<div class="c" style="left:246px;top:502px;width:193px;padding-left:1px;padding-right:5px;">Inkoop computers, randapp., suppl.</div>
<div class="a" style="left:425px;top:512px;width:1px;height:2px;background:#000"></div>
<div class="a" style="left:429px;top:512px;width:1px;height:2px;background:#000"></div>
<div class="a" style="left:433px;top:512px;width:1px;height:2px;background:#000"></div>
<div class="c" style="left:440px;top:502px;width:31px;text-align:right;padding-right:2px;">0</div>
<div class="c" style="left:472px;top:502px;width:31px;text-align:right;padding-right:2px;">0</div>
<div class="c" style="left:504px;top:502px;width:64px;text-align:right;padding-right:2px;">543833</div>
<div class="c" style="left:569px;top:502px;width:52px;text-align:right;padding-right:2px;">0</div>
<div class="c" style="left:622px;top:502px;width:60px;text-align:right;padding-right:2px;">0,00</div>
<div class="c" style="left:683px;top:502px;width:55px;text-align:right;padding-right:2px;">23,23</div>
<div class="c" style="left:739px;top:502px;width:27px;padding-left:1px;">0</div>
<div class="c" style="left:767px;top:502px;width:299px;padding-left:1px;">Minolta toner valuekit kleur, 1710594-001, per stu</div>
<div class="a" style="left:32px;top:519px;width:1034px;height:16px;background:#FFFFFF"></div>
<div class="hl" style="left:14px;top:535px;width:1052px;"></div>
<div class="c" style="left:32px;top:519px;width:91px;padding-left:1px;">09-05-2007</div>
<div class="c" style="left:124px;top:519px;width:51px;text-align:right;padding-right:2px;">4400</div>
<div class="c" style="left:176px;top:519px;width:69px;padding-left:1px;">0</div>
<div class="c" style="left:246px;top:519px;width:193px;padding-left:1px;padding-right:5px;">Kantoorbenodigdheden</div>
<div class="a" style="left:424px;top:529px;width:1px;height:2px;background:#000"></div>
<div class="a" style="left:428px;top:529px;width:1px;height:2px;background:#000"></div>
<div class="a" style="left:432px;top:529px;width:1px;height:2px;background:#000"></div>
<div class="c" style="left:440px;top:519px;width:31px;text-align:right;padding-right:2px;">0</div>
<div class="c" style="left:472px;top:519px;width:31px;text-align:right;padding-right:2px;">0</div>
<div class="c" style="left:504px;top:519px;width:64px;text-align:right;padding-right:2px;">543833</div>
<div class="c" style="left:569px;top:519px;width:52px;text-align:right;padding-right:2px;">0</div>
<div class="c" style="left:622px;top:519px;width:60px;text-align:right;padding-right:2px;">97,00</div>
<div class="c" style="left:683px;top:519px;width:55px;text-align:right;padding-right:2px;">0,00</div>
<div class="c" style="left:739px;top:519px;width:27px;padding-left:1px;">0</div>
<div class="c" style="left:767px;top:519px;width:299px;padding-left:1px;">Xerox papier Colotech+ A4 120g/m² wit PK/500VL, 3R</div>
<div class="a" style="left:32px;top:536px;width:1034px;height:16px;background:#C0FFFF"></div>
<div class="hl" style="left:14px;top:552px;width:1052px;"></div>
<div class="c" style="left:32px;top:536px;width:91px;padding-left:1px;">09-05-2007</div>
<div class="c" style="left:124px;top:536px;width:51px;text-align:right;padding-right:2px;">7020</div>
<div class="c" style="left:176px;top:536px;width:69px;padding-left:1px;">0</div>
<div class="c" style="left:246px;top:536px;width:193px;padding-left:1px;padding-right:5px;">Inkoop computers, randapp., suppl.</div>
<div class="a" style="left:425px;top:546px;width:1px;height:2px;background:#000"></div>
<div class="a" style="left:429px;top:546px;width:1px;height:2px;background:#000"></div>
<div class="a" style="left:433px;top:546px;width:1px;height:2px;background:#000"></div>
<div class="c" style="left:440px;top:536px;width:31px;text-align:right;padding-right:2px;">0</div>
<div class="c" style="left:472px;top:536px;width:31px;text-align:right;padding-right:2px;">0</div>
<div class="c" style="left:504px;top:536px;width:64px;text-align:right;padding-right:2px;">543833</div>
<div class="c" style="left:569px;top:536px;width:52px;text-align:right;padding-right:2px;">0</div>
<div class="c" style="left:622px;top:536px;width:60px;text-align:right;padding-right:2px;">0,00</div>
<div class="c" style="left:683px;top:536px;width:55px;text-align:right;padding-right:2px;">97,00</div>
<div class="c" style="left:739px;top:536px;width:27px;padding-left:1px;">0</div>
<div class="c" style="left:767px;top:536px;width:299px;padding-left:1px;">Xerox papier Colotech+ A4 120g/m² wit PK/500VL, 3R</div>
<div class="a" style="left:32px;top:553px;width:1034px;height:16px;background:#FFFFFF"></div>
<div class="hl" style="left:14px;top:569px;width:1052px;"></div>
<div class="c" style="left:32px;top:553px;width:91px;padding-left:1px;">09-05-2007</div>
<div class="c" style="left:124px;top:553px;width:51px;text-align:right;padding-right:2px;">4400</div>
<div class="c" style="left:176px;top:553px;width:69px;padding-left:1px;">0</div>
<div class="c" style="left:246px;top:553px;width:193px;padding-left:1px;padding-right:5px;">Kantoorbenodigdheden</div>
<div class="a" style="left:424px;top:563px;width:1px;height:2px;background:#000"></div>
<div class="a" style="left:428px;top:563px;width:1px;height:2px;background:#000"></div>
<div class="a" style="left:432px;top:563px;width:1px;height:2px;background:#000"></div>
<div class="c" style="left:440px;top:553px;width:31px;text-align:right;padding-right:2px;">0</div>
<div class="c" style="left:472px;top:553px;width:31px;text-align:right;padding-right:2px;">0</div>
<div class="c" style="left:504px;top:553px;width:64px;text-align:right;padding-right:2px;">543833</div>
<div class="c" style="left:569px;top:553px;width:52px;text-align:right;padding-right:2px;">0</div>
<div class="c" style="left:622px;top:553px;width:60px;text-align:right;padding-right:2px;">1,50</div>
<div class="c" style="left:683px;top:553px;width:55px;text-align:right;padding-right:2px;">0,00</div>
<div class="c" style="left:739px;top:553px;width:27px;padding-left:1px;">0</div>
<div class="c" style="left:767px;top:553px;width:299px;padding-left:1px;">Sellotape plakband 1109 12mmx66m transparant, 5269</div>
<div class="a" style="left:32px;top:570px;width:1034px;height:16px;background:#C0FFFF"></div>
<div class="hl" style="left:14px;top:586px;width:1052px;"></div>
<div class="c" style="left:32px;top:570px;width:91px;padding-left:1px;">09-05-2007</div>
<div class="c" style="left:124px;top:570px;width:51px;text-align:right;padding-right:2px;">7020</div>
<div class="c" style="left:176px;top:570px;width:69px;padding-left:1px;">0</div>
<div class="c" style="left:246px;top:570px;width:193px;padding-left:1px;padding-right:5px;">Inkoop computers, randapp., suppl.</div>
<div class="a" style="left:425px;top:580px;width:1px;height:2px;background:#000"></div>
<div class="a" style="left:429px;top:580px;width:1px;height:2px;background:#000"></div>
<div class="a" style="left:433px;top:580px;width:1px;height:2px;background:#000"></div>
<div class="c" style="left:440px;top:570px;width:31px;text-align:right;padding-right:2px;">0</div>
<div class="c" style="left:472px;top:570px;width:31px;text-align:right;padding-right:2px;">0</div>
<div class="c" style="left:504px;top:570px;width:64px;text-align:right;padding-right:2px;">543833</div>
<div class="c" style="left:569px;top:570px;width:52px;text-align:right;padding-right:2px;">0</div>
<div class="c" style="left:622px;top:570px;width:60px;text-align:right;padding-right:2px;">0,00</div>
<div class="c" style="left:683px;top:570px;width:55px;text-align:right;padding-right:2px;">1,50</div>
<div class="c" style="left:739px;top:570px;width:27px;padding-left:1px;">0</div>
<div class="c" style="left:767px;top:570px;width:299px;padding-left:1px;">Sellotape plakband 1109 12mmx66m transparant, 5269</div>
<div class="a" style="left:32px;top:587px;width:1034px;height:16px;background:#FFFFFF"></div>
<div class="hl" style="left:14px;top:603px;width:1052px;"></div>
<div class="c" style="left:32px;top:587px;width:91px;padding-left:1px;">09-05-2007</div>
<div class="c" style="left:124px;top:587px;width:51px;text-align:right;padding-right:2px;">4400</div>
<div class="c" style="left:176px;top:587px;width:69px;padding-left:1px;">0</div>
<div class="c" style="left:246px;top:587px;width:193px;padding-left:1px;padding-right:5px;">Kantoorbenodigdheden</div>
<div class="a" style="left:424px;top:597px;width:1px;height:2px;background:#000"></div>
<div class="a" style="left:428px;top:597px;width:1px;height:2px;background:#000"></div>
<div class="a" style="left:432px;top:597px;width:1px;height:2px;background:#000"></div>
<div class="c" style="left:440px;top:587px;width:31px;text-align:right;padding-right:2px;">0</div>
<div class="c" style="left:472px;top:587px;width:31px;text-align:right;padding-right:2px;">0</div>
<div class="c" style="left:504px;top:587px;width:64px;text-align:right;padding-right:2px;">543833</div>
<div class="c" style="left:569px;top:587px;width:52px;text-align:right;padding-right:2px;">0</div>
<div class="c" style="left:622px;top:587px;width:60px;text-align:right;padding-right:2px;">2,00</div>
<div class="c" style="left:683px;top:587px;width:55px;text-align:right;padding-right:2px;">0,00</div>
<div class="c" style="left:739px;top:587px;width:27px;padding-left:1px;">0</div>
<div class="c" style="left:767px;top:587px;width:299px;padding-left:1px;">Paperline schrijfblok A4 lijn, 2007, per stuk</div>
<div class="a" style="left:32px;top:604px;width:1034px;height:16px;background:#C0FFFF"></div>
<div class="hl" style="left:14px;top:620px;width:1052px;"></div>
<div class="c" style="left:32px;top:604px;width:91px;padding-left:1px;">09-05-2007</div>
<div class="c" style="left:124px;top:604px;width:51px;text-align:right;padding-right:2px;">7020</div>
<div class="c" style="left:176px;top:604px;width:69px;padding-left:1px;">0</div>
<div class="c" style="left:246px;top:604px;width:193px;padding-left:1px;padding-right:5px;">Inkoop computers, randapp., suppl.</div>
<div class="a" style="left:425px;top:614px;width:1px;height:2px;background:#000"></div>
<div class="a" style="left:429px;top:614px;width:1px;height:2px;background:#000"></div>
<div class="a" style="left:433px;top:614px;width:1px;height:2px;background:#000"></div>
<div class="c" style="left:440px;top:604px;width:31px;text-align:right;padding-right:2px;">0</div>
<div class="c" style="left:472px;top:604px;width:31px;text-align:right;padding-right:2px;">0</div>
<div class="c" style="left:504px;top:604px;width:64px;text-align:right;padding-right:2px;">543833</div>
<div class="c" style="left:569px;top:604px;width:52px;text-align:right;padding-right:2px;">0</div>
<div class="c" style="left:622px;top:604px;width:60px;text-align:right;padding-right:2px;">0,00</div>
<div class="c" style="left:683px;top:604px;width:55px;text-align:right;padding-right:2px;">2,00</div>
<div class="c" style="left:739px;top:604px;width:27px;padding-left:1px;">0</div>
<div class="c" style="left:767px;top:604px;width:299px;padding-left:1px;">Paperline schrijfblok A4 lijn, 2007, per stuk</div>
<div class="a" style="left:32px;top:621px;width:1034px;height:16px;background:#FFFFFF"></div>
<div class="hl" style="left:14px;top:637px;width:1052px;background:#868272"></div>
<svg class="a" style="left:17px;top:626px" width="9" height="9" viewBox="0 0 9 9"><path d="M4.5 0V9M0 4.5H9M1 1L8 8M8 1L1 8" stroke="#000" stroke-width="1"/><rect x="3" y="3" width="3" height="3" fill="#000"/></svg>
<div class="vl" style="left:31px;top:92px;height:546px"></div>
<div class="vl" style="left:123px;top:92px;height:546px"></div>
<div class="vl" style="left:175px;top:92px;height:546px"></div>
<div class="vl" style="left:245px;top:92px;height:546px"></div>
<div class="vl" style="left:439px;top:92px;height:546px"></div>
<div class="vl" style="left:471px;top:92px;height:546px"></div>
<div class="vl" style="left:503px;top:92px;height:546px"></div>
<div class="vl" style="left:568px;top:92px;height:546px"></div>
<div class="vl" style="left:621px;top:92px;height:546px"></div>
<div class="vl" style="left:682px;top:92px;height:546px"></div>
<div class="vl" style="left:738px;top:92px;height:546px"></div>
<div class="vl" style="left:766px;top:92px;height:546px"></div>
<div class="vl" style="left:1066px;top:92px;height:546px"></div>
<div class="vl" style="left:123px;top:162px;height:16px;background:#A4B8E0"></div>
<div class="vl" style="left:175px;top:162px;height:16px;background:#A4B8E0"></div>
<div class="vl" style="left:245px;top:162px;height:16px;background:#A4B8E0"></div>
<div class="vl" style="left:439px;top:162px;height:16px;background:#A4B8E0"></div>
<div class="vl" style="left:471px;top:162px;height:16px;background:#A4B8E0"></div>
<div class="vl" style="left:503px;top:162px;height:16px;background:#A4B8E0"></div>
<div class="vl" style="left:568px;top:162px;height:16px;background:#A4B8E0"></div>
<div class="vl" style="left:621px;top:162px;height:16px;background:#A4B8E0"></div>
<div class="vl" style="left:682px;top:162px;height:16px;background:#A4B8E0"></div>
<div class="vl" style="left:738px;top:162px;height:16px;background:#A4B8E0"></div>
<div class="vl" style="left:766px;top:162px;height:16px;background:#A4B8E0"></div>
<div class="a" style="left:424px;top:289px;width:421px;height:130px;background:#0830C8;border-radius:7px 7px 0 0"></div>
<div class="a" style="left:425px;top:290px;width:419px;height:28px;border-radius:6px 6px 0 0;background:linear-gradient(#3D8DF8 0px,#1A6CF0 2px,#0058E8 5px,#0054E4 12px,#0050E0 18px,#0056EA 22px,#0050E2 25px,#0038C8 28px)"></div>
<div class="t" style="left:430px;top:297px;font-size:13px;font-weight:bold;color:#fff;text-shadow:1px 1px 0 #0A1E80">Markeer specifieke regels</div>
<div class="a" style="left:427px;top:318px;width:415px;height:98px;background:#ECE9D8"></div>
<div class="t" style="left:491px;top:323px;line-height:13px">voer een trefwoord of getal in waarop de regels gemarkeerd moeten
worden:</div>
<svg class="a" style="left:439px;top:347px" width="32" height="32" viewBox="0 0 32 32">
<rect width="32" height="32" fill="#FAFDF8"/>
<path d="M18.5 1L32 15H18.5Z" fill="#5CDC5C"/>
<g fill="#50D850">
<rect x="14.5" y="4" width="4" height="2"/>
<rect x="11" y="7.3" width="7.5" height="2"/>
<rect x="7.5" y="10.5" width="11" height="2"/>
<rect x="3.5" y="13.5" width="15" height="2"/>
<rect x="18" y="17" width="14" height="2"/>
<rect x="18" y="21" width="14" height="2"/>
<rect x="18" y="25" width="14" height="2"/>
<rect x="18" y="29" width="14" height="2"/>
</g>
</svg>
<div class="a" style="left:487px;top:355px;width:345px;height:21px;background:#fff;border:1px solid #7F9DB9;"></div>
<div class="t" style="left:489px;top:357px;letter-spacing:0.5px">xerox</div>
<div class="a" style="left:518px;top:358px;width:1px;height:13px;background:#000"></div>
<div class="a" style="left:652px;top:384px;width:83px;height:23px;border:1px solid #003C74;border-radius:3px;background:linear-gradient(#FFFFFF,#F4F3EE 60%,#E6E3D8);box-shadow:inset 0 -2px 0 #D8D4C8;"></div>
<div class="t" style="left:652px;top:388px;width:83px;text-align:center;font-weight:bold;letter-spacing:0.5px">Annuleren</div>
<div class="a" style="left:748px;top:384px;width:83px;height:23px;border:1px solid #003C74;border-radius:3px;background:linear-gradient(#FFFFFF,#F4F3EE 60%,#E6E3D8);box-shadow:inset 0 0 0 1px #B8D0F8,inset 0 -2px 0 #98B8F0;"></div>
<div class="t" style="left:748px;top:388px;width:83px;text-align:center;font-weight:bold;letter-spacing:0">OK</div>
</body></html>
